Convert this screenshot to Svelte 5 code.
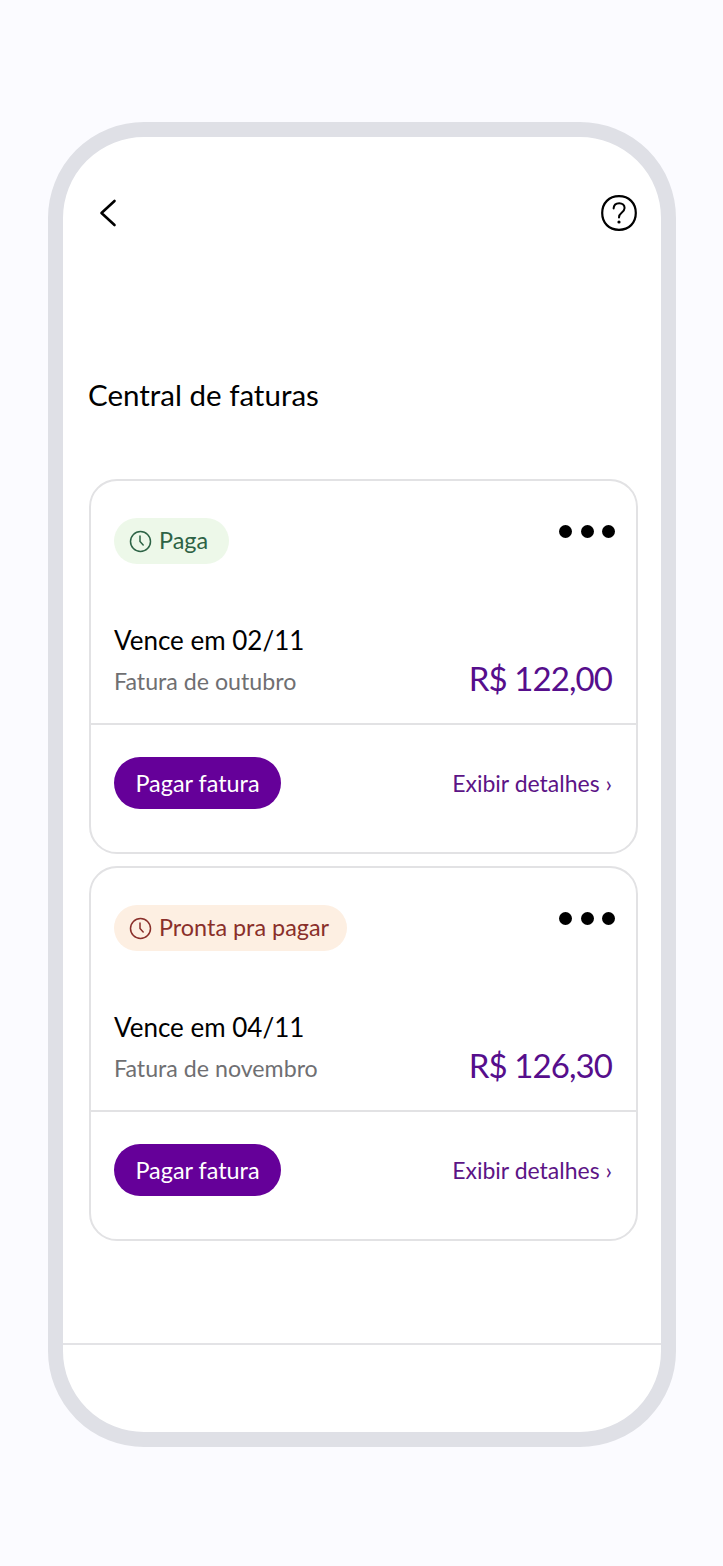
<script>
  const invoices = [
    { status: 'Paga', tone: 'paid', due: 'Vence em 02/11', label: 'Fatura de outubro', amount: 'R$ 122,00' },
    { status: 'Pronta pra pagar', tone: 'ready', due: 'Vence em 04/11', label: 'Fatura de novembro', amount: 'R$ 126,30' }
  ];
</script>

<div class="page">
  <div class="phone">
    <header class="topbar">
      <svg class="back" width="20" height="30" viewBox="0 0 20 30" aria-label="Voltar">
        <path d="M16.5 3 L3.5 15 L16.5 27" fill="none" stroke="#000" stroke-width="2.6" stroke-linecap="round" stroke-linejoin="round" />
      </svg>
      <svg class="help" width="36" height="36" viewBox="0 0 36 36" aria-label="Ajuda">
        <path d="M18 1.2 C28 1.2 34.8 8 34.8 18 C34.8 28 28 34.8 18 34.8 C8 34.8 1.2 28 1.2 18 C1.2 8 8 1.2 18 1.2 Z" fill="none" stroke="#000" stroke-width="2.2" />
        <path d="M12.6 13.4 C12.8 10 15 8.2 18.2 8.2 C21.4 8.2 23.6 10.2 23.6 13 C23.6 15.4 22.2 16.6 20.4 18 C18.8 19.2 18 20.2 18 22.4" fill="none" stroke="#000" stroke-width="2" stroke-linecap="round" />
        <circle cx="18" cy="27" r="1.6" fill="#000" />
      </svg>
    </header>

    <h1>Central de faturas</h1>

    <div class="cards">
      {#each invoices as inv}
        <article class="card">
          <div class="card-main">
            <div class="card-top">
              <span class="badge {inv.tone}">
                <svg width="23" height="23" viewBox="0 0 23 23">
                  <circle cx="11.5" cy="11.5" r="10" fill="none" stroke="currentColor" stroke-width="1.5" />
                  <path d="M11 6 V11.5 L14.2 15" fill="none" stroke="currentColor" stroke-width="1.5" stroke-linecap="round" stroke-linejoin="round" />
                </svg>
                <span class="badge-text">{inv.status}</span>
              </span>
              <div class="dots"><i></i><i></i><i></i></div>
            </div>
            <p class="due">{inv.due}</p>
            <div class="row">
              <span class="label">{inv.label}</span>
              <span class="amount">{inv.amount}</span>
            </div>
          </div>
          <div class="card-foot">
            <button class="pay">Pagar fatura</button>
            <span class="details">Exibir detalhes ›</span>
          </div>
        </article>
      {/each}
    </div>

    <div class="bottom"></div>
  </div>
</div>

<style>
  :global(body) {
    margin: 0;
    background: #fbfbff;
  }
  .page {
    height: 1566px;
    padding: 122px 47px 0 48px;
    box-sizing: border-box;
    font-family: Lato, "Open Sans", sans-serif;
  }
  .phone {
    height: 1325px;
    box-sizing: border-box;
    border: 15px solid #dfe0e6;
    border-radius: 96px;
    background: #fff;
    display: flex;
    flex-direction: column;
  }
  .topbar {
    display: flex;
    justify-content: space-between;
    align-items: center;
    height: 36px;
    margin-top: 58px;
    padding: 0 24px 0 35px;
  }
  .back {
    width: 20px;
    height: 30px;
  }
  h1 {
    margin: 146px 0 0 25px;
    height: 36px;
    font-size: 29.5px;
    line-height: 36px;
    font-weight: 400;
    color: #000;
  }
  .cards {
    margin: 66px 23px 0 26px;
    display: flex;
    flex-direction: column;
    gap: 12px;
  }
  .card {
    height: 375px;
    box-sizing: border-box;
    border: 2px solid #e2e2e4;
    border-radius: 28px;
  }
  .card-main {
    height: 244px;
    box-sizing: border-box;
    padding: 37px 23px 0 23px;
    border-bottom: 2px solid #e2e2e4;
  }
  .card-top {
    display: flex;
    justify-content: space-between;
    align-items: flex-start;
  }
  .badge {
    display: inline-flex;
    align-items: center;
    gap: 7px;
    height: 46px;
    padding-left: 15px;
    border-radius: 23px;
    font-size: 23.4px;
  }
  .badge-text {
    margin-top: -2px;
  }
  .badge.paid {
    padding-right: 21px;
    background: #edf8e9;
    color: #2d6345;
  }
  .badge.ready {
    padding-right: 18px;
    background: #fdefe2;
    color: #8a2f2a;
  }
  .dots {
    display: flex;
    gap: 8.5px;
    margin: 7px -2px 0 0;
  }
  .dots i {
    width: 13px;
    height: 13px;
    border-radius: 50%;
    background: #000;
  }
  .due {
    margin: 59px 0 0;
    height: 34px;
    font-size: 26px;
    line-height: 34px;
    color: #000;
  }
  .row {
    display: flex;
    justify-content: space-between;
    align-items: center;
    margin-top: 5px;
  }
  .label {
    font-size: 23.2px;
    color: #6f6f72;
  }
  .amount {
    margin: -5px 1px 0 0;
    font-size: 33px;
    line-height: 42px;
    letter-spacing: -0.9px;
    color: #560e8c;
  }
  .card-foot {
    display: flex;
    justify-content: space-between;
    align-items: center;
    padding: 32px 23px 0;
  }
  .pay {
    height: 52px;
    width: 167px;
    border: 0;
    border-radius: 26px;
    background: #650099;
    color: #fff;
    font: inherit;
    font-size: 23.4px;
  }
  .details {
    margin-right: 1px;
    font-size: 23px;
    color: #5c1486;
  }
  .bottom {
    margin-top: 102px;
    border-top: 2px solid #e3e3e6;
  }
</style>
